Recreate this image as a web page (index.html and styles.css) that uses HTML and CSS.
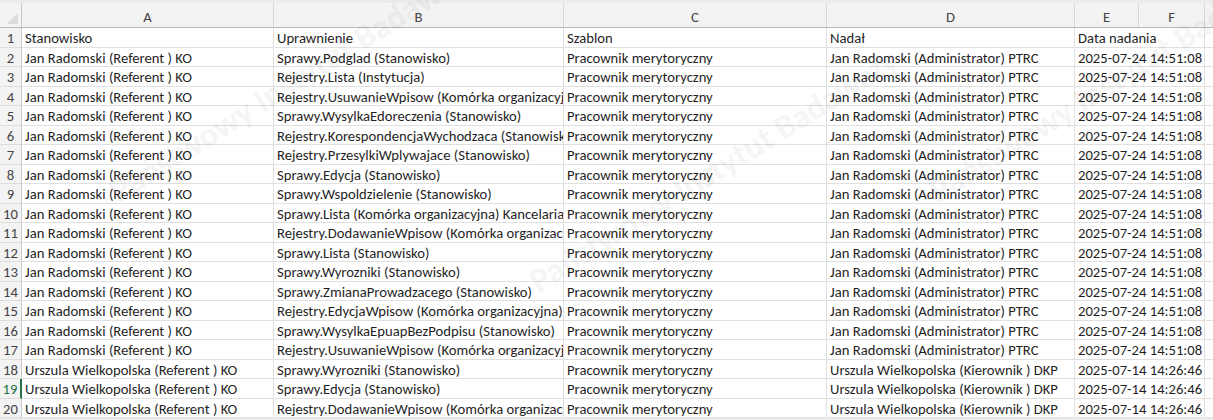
FILE: index.html
```html
<!DOCTYPE html>
<html lang="pl">
<head>
<meta charset="utf-8">
<title>Arkusz</title>
<link rel="stylesheet" href="styles.css">
</head>
<body>
<div class="sheet">
  <div class="grid">
    <div class="corner"><span class="tri"></span></div>
    <div class="ch">A</div>
    <div class="ch">B</div>
    <div class="ch">C</div>
    <div class="ch">D</div>
    <div class="ch">E</div>
    <div class="ch">F</div>
    <div class="ch rest"></div>

    <div class="rh">1</div><div class="c">Stanowisko</div><div class="c">Uprawnienie</div><div class="c">Szablon</div><div class="c">Nadał</div><div class="c ef">Data nadania</div><div class="c rest"></div>
    <div class="rh">2</div><div class="c">Jan Radomski (Referent ) KO</div><div class="c">Sprawy.Podglad (Stanowisko)</div><div class="c">Pracownik merytoryczny</div><div class="c">Jan Radomski (Administrator) PTRC</div><div class="c ef">2025-07-24 14:51:08</div><div class="c rest"></div>
    <div class="rh">3</div><div class="c">Jan Radomski (Referent ) KO</div><div class="c">Rejestry.Lista (Instytucja)</div><div class="c">Pracownik merytoryczny</div><div class="c">Jan Radomski (Administrator) PTRC</div><div class="c ef">2025-07-24 14:51:08</div><div class="c rest"></div>
    <div class="rh">4</div><div class="c">Jan Radomski (Referent ) KO</div><div class="c">Rejestry.UsuwanieWpisow (Komórka organizacyjna)</div><div class="c">Pracownik merytoryczny</div><div class="c">Jan Radomski (Administrator) PTRC</div><div class="c ef">2025-07-24 14:51:08</div><div class="c rest"></div>
    <div class="rh">5</div><div class="c">Jan Radomski (Referent ) KO</div><div class="c">Sprawy.WysylkaEdoreczenia (Stanowisko)</div><div class="c">Pracownik merytoryczny</div><div class="c">Jan Radomski (Administrator) PTRC</div><div class="c ef">2025-07-24 14:51:08</div><div class="c rest"></div>
    <div class="rh">6</div><div class="c">Jan Radomski (Referent ) KO</div><div class="c">Rejestry.KorespondencjaWychodzaca (Stanowisko)</div><div class="c">Pracownik merytoryczny</div><div class="c">Jan Radomski (Administrator) PTRC</div><div class="c ef">2025-07-24 14:51:08</div><div class="c rest"></div>
    <div class="rh">7</div><div class="c">Jan Radomski (Referent ) KO</div><div class="c">Rejestry.PrzesylkiWplywajace (Stanowisko)</div><div class="c">Pracownik merytoryczny</div><div class="c">Jan Radomski (Administrator) PTRC</div><div class="c ef">2025-07-24 14:51:08</div><div class="c rest"></div>
    <div class="rh">8</div><div class="c">Jan Radomski (Referent ) KO</div><div class="c">Sprawy.Edycja (Stanowisko)</div><div class="c">Pracownik merytoryczny</div><div class="c">Jan Radomski (Administrator) PTRC</div><div class="c ef">2025-07-24 14:51:08</div><div class="c rest"></div>
    <div class="rh">9</div><div class="c">Jan Radomski (Referent ) KO</div><div class="c">Sprawy.Wspoldzielenie (Stanowisko)</div><div class="c">Pracownik merytoryczny</div><div class="c">Jan Radomski (Administrator) PTRC</div><div class="c ef">2025-07-24 14:51:08</div><div class="c rest"></div>
    <div class="rh">10</div><div class="c">Jan Radomski (Referent ) KO</div><div class="c">Sprawy.Lista (Komórka organizacyjna) Kancelaria</div><div class="c">Pracownik merytoryczny</div><div class="c">Jan Radomski (Administrator) PTRC</div><div class="c ef">2025-07-24 14:51:08</div><div class="c rest"></div>
    <div class="rh">11</div><div class="c">Jan Radomski (Referent ) KO</div><div class="c">Rejestry.DodawanieWpisow (Komórka organizacyjna)</div><div class="c">Pracownik merytoryczny</div><div class="c">Jan Radomski (Administrator) PTRC</div><div class="c ef">2025-07-24 14:51:08</div><div class="c rest"></div>
    <div class="rh">12</div><div class="c">Jan Radomski (Referent ) KO</div><div class="c">Sprawy.Lista (Stanowisko)</div><div class="c">Pracownik merytoryczny</div><div class="c">Jan Radomski (Administrator) PTRC</div><div class="c ef">2025-07-24 14:51:08</div><div class="c rest"></div>
    <div class="rh">13</div><div class="c">Jan Radomski (Referent ) KO</div><div class="c">Sprawy.Wyrozniki (Stanowisko)</div><div class="c">Pracownik merytoryczny</div><div class="c">Jan Radomski (Administrator) PTRC</div><div class="c ef">2025-07-24 14:51:08</div><div class="c rest"></div>
    <div class="rh">14</div><div class="c">Jan Radomski (Referent ) KO</div><div class="c">Sprawy.ZmianaProwadzacego (Stanowisko)</div><div class="c">Pracownik merytoryczny</div><div class="c">Jan Radomski (Administrator) PTRC</div><div class="c ef">2025-07-24 14:51:08</div><div class="c rest"></div>
    <div class="rh">15</div><div class="c">Jan Radomski (Referent ) KO</div><div class="c">Rejestry.EdycjaWpisow (Komórka organizacyjna)</div><div class="c">Pracownik merytoryczny</div><div class="c">Jan Radomski (Administrator) PTRC</div><div class="c ef">2025-07-24 14:51:08</div><div class="c rest"></div>
    <div class="rh">16</div><div class="c">Jan Radomski (Referent ) KO</div><div class="c">Sprawy.WysylkaEpuapBezPodpisu (Stanowisko)</div><div class="c">Pracownik merytoryczny</div><div class="c">Jan Radomski (Administrator) PTRC</div><div class="c ef">2025-07-24 14:51:08</div><div class="c rest"></div>
    <div class="rh">17</div><div class="c">Jan Radomski (Referent ) KO</div><div class="c">Rejestry.UsuwanieWpisow (Komórka organizacyjna)</div><div class="c">Pracownik merytoryczny</div><div class="c">Jan Radomski (Administrator) PTRC</div><div class="c ef">2025-07-24 14:51:08</div><div class="c rest"></div>
    <div class="rh">18</div><div class="c">Urszula Wielkopolska (Referent ) KO</div><div class="c">Sprawy.Wyrozniki (Stanowisko)</div><div class="c">Pracownik merytoryczny</div><div class="c">Urszula Wielkopolska (Kierownik ) DKP</div><div class="c ef">2025-07-14 14:26:46</div><div class="c rest"></div>
    <div class="rh active">19</div><div class="c">Urszula Wielkopolska (Referent ) KO</div><div class="c">Sprawy.Edycja (Stanowisko)</div><div class="c">Pracownik merytoryczny</div><div class="c">Urszula Wielkopolska (Kierownik ) DKP</div><div class="c ef">2025-07-14 14:26:46</div><div class="c rest"></div>
    <div class="rh">20</div><div class="c">Urszula Wielkopolska (Referent ) KO</div><div class="c">Rejestry.DodawanieWpisow (Komórka organizacyjna)</div><div class="c">Pracownik merytoryczny</div><div class="c">Urszula Wielkopolska (Kierownik ) DKP</div><div class="c ef">2025-07-14 14:26:46</div><div class="c rest"></div>
  </div>
  <div class="wm wm1">Państwowy Instytut Badawczy</div>
  <div class="wm wm2">Państwowy Instytut Badawczy</div>
  <div class="wm wm3">Państwowy Instytut Badawczy</div>
</div>
</body>
</html>
```

FILE: styles.css
```css
html, body {
  margin: 0;
  padding: 0;
  background: #ffffff;
}

.sheet {
  position: relative;
  width: 1213px;
  height: 420px;
  overflow: hidden;
  background: #ebebeb;
  padding-top: 3px;
  box-sizing: border-box;
  font-family: "Carlito", "Lato", "Liberation Sans", sans-serif;
  font-size: 14.67px;
}

.grid {
  display: grid;
  grid-template-columns: 22px 252px 290px 263px 248px 64px 66px 1fr;
  grid-template-rows: 25px;
  grid-auto-rows: 19.5px;
  background: #ffffff;
}

.corner {
  background: #f3f3f3;
  border-right: 1px solid #c9c9c9;
  border-bottom: 1px solid #b8b8b8;
  box-sizing: border-box;
  position: relative;
}

.tri {
  position: absolute;
  right: 3px;
  bottom: 3px;
  width: 0;
  height: 0;
  border-left: 11px solid transparent;
  border-bottom: 11px solid #dcdcdc;
}

.ch {
  background: #f3f3f3;
  border-right: 1px solid #d6d6d6;
  border-bottom: 1px solid #b8b8b8;
  box-sizing: border-box;
  text-align: center;
  color: #444444;
  line-height: 18px;
  padding-top: 5px;
}

.ch.rest {
  border-right: none;
}

.rh {
  background: #f3f3f3;
  border-right: 1px solid #c9c9c9;
  border-bottom: 1px solid #dedede;
  box-sizing: border-box;
  text-align: center;
  color: #444444;
  line-height: 19px;
  padding-top: 1px;
  overflow: hidden;
}

.rh.active {
  color: #217346;
  border-right: 2px solid #217346;
}

.c {
  border-right: 1px solid #e0e0e0;
  border-bottom: 1px solid #e0e0e0;
  box-sizing: border-box;
  padding: 1px 3px 0 3px;
  line-height: 19px;
  color: #1f1f1f;
  white-space: nowrap;
  overflow: hidden;
}

.c.ef {
  grid-column: span 2;
}

.c.rest {
  border-right: none;
  padding: 0;
}

.wm {
  position: absolute;
  color: #000000;
  opacity: 0.035;
  font-size: 34px;
  font-weight: bold;
  white-space: nowrap;
  transform: rotate(-32deg);
  pointer-events: none;
}

.wm1 { left: 80px; top: 60px; }
.wm2 { left: 500px; top: 150px; }
.wm3 { left: 900px; top: 60px; }
```
